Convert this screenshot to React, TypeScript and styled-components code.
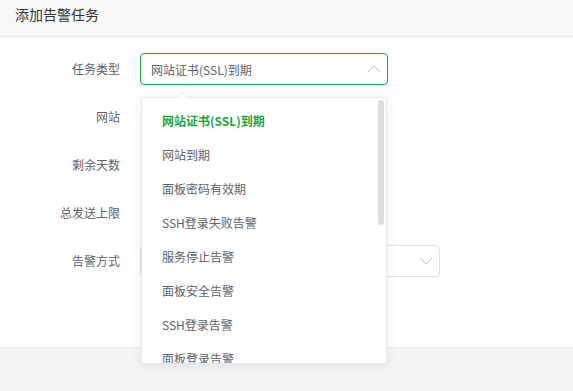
import * as React from 'react';
import styled, { createGlobalStyle } from 'styled-components';

const GlobalStyle = createGlobalStyle`
    html, body {
        margin: 0;
        padding: 0;
        background: #ffffff;
    }
    body {
        font-family: 'Noto Sans CJK SC', 'Noto Sans', sans-serif;
        font-size: 12px;
        color: #606266;
    }
`;

const Dialog = styled.div`
    width: 573px;
    height: 391px;
    display: flex;
    flex-direction: column;
    overflow: hidden;
`;

const Header = styled.div`
    height: 37px;
    box-sizing: border-box;
    padding: 4px 15px 0;
    background: #f8f8f8;
    border-bottom: 1px solid #e6e6e6;
    font-size: 14px;
    line-height: 20px;
    color: #333333;
`;

const Body = styled.div`
    flex: 1;
    padding-top: 16px;
    display: flex;
    flex-direction: column;
    gap: 16px;
    background: #ffffff;
`;

const Footer = styled.div`
    height: 43px;
    flex: 0 0 auto;
    background: #f3f4f4;
    border-top: 1px solid #ebeded;
`;

const FormItem = styled.div`
    display: flex;
    align-items: center;
    height: 32px;
`;

const Label = styled.label`
    width: 140px;
    box-sizing: border-box;
    padding-right: 20px;
    text-align: right;
    color: #606266;
    line-height: 32px;
    flex: 0 0 auto;
`;

const Control = styled.div`
    position: relative;
    height: 32px;
`;

const Select = styled.div<{ $width: number; $focus?: boolean }>`
    width: ${p => p.$width}px;
    height: 32px;
    box-sizing: border-box;
    border: 1px solid ${p => (p.$focus ? '#20a53a' : '#dcdfe6')};
    border-radius: 4px;
    padding: 0 30px 0 10px;
    display: flex;
    align-items: center;
    color: #606266;
    background: #ffffff;
    position: relative;
`;

const Chevron = styled.svg`
    position: absolute;
    right: 6px;
    top: 10px;
`;

const Dropdown = styled.div`
    position: absolute;
    left: 1px;
    top: 44px;
    width: 246px;
    height: 267px;
    box-sizing: border-box;
    border: 1px solid #e4e7ed;
    border-radius: 4px;
    background: #ffffff;
    box-shadow: 0 2px 12px rgba(0, 0, 0, 0.08);
    z-index: 10;
`;

const Arrow = styled.div`
    position: absolute;
    top: -6px;
    left: 34px;
    width: 0;
    height: 0;
    border-left: 6px solid transparent;
    border-right: 6px solid transparent;
    border-bottom: 6px solid #e4e7ed;

    &::after {
        content: '';
        position: absolute;
        left: -5px;
        top: 1px;
        border-left: 5px solid transparent;
        border-right: 5px solid transparent;
        border-bottom: 5px solid #ffffff;
    }
`;

const List = styled.ul`
    list-style: none;
    margin: 0;
    padding: 6px 0 0;
    height: 100%;
    box-sizing: border-box;
    overflow: hidden;
    border-radius: 4px;
`;

const Option = styled.li<{ $selected?: boolean }>`
    height: 34px;
    line-height: 34px;
    padding: 0 20px;
    font-size: 12px;
    color: ${p => (p.$selected ? '#20a53a' : '#606266')};
    font-weight: ${p => (p.$selected ? 700 : 400)};
    white-space: nowrap;
`;

const Thumb = styled.div`
    position: absolute;
    right: 2px;
    top: 2px;
    width: 6px;
    height: 125px;
    border-radius: 3px;
    background: #dddddd;
`;

const options = [
    '网站证书(SSL)到期',
    '网站到期',
    '面板密码有效期',
    'SSH登录失败告警',
    '服务停止告警',
    '面板安全告警',
    'SSH登录告警',
    '面板登录告警',
];

const ChevronIcon = ({ up }: { up?: boolean }) => (
    <Chevron width="14" height="10" viewBox="0 0 14 10">
        <path
            d={up ? 'M1 8 L7 2 L13 8' : 'M1 2 L7 8 L13 2'}
            fill="none"
            stroke="#c0c4cc"
            strokeWidth="1"
        />
    </Chevron>
);

export default function App() {
    const selected = options[0];
    return (
        <Dialog>
            <GlobalStyle />
            <Header>添加告警任务</Header>
            <Body>
                <FormItem>
                    <Label>任务类型</Label>
                    <Control>
                        <Select $width={248} $focus>
                            {selected}
                            <ChevronIcon up />
                        </Select>
                        <Dropdown>
                            <Arrow />
                            <List>
                                {options.map(o => (
                                    <Option key={o} $selected={o === selected}>
                                        {o}
                                    </Option>
                                ))}
                            </List>
                            <Thumb />
                        </Dropdown>
                    </Control>
                </FormItem>
                <FormItem>
                    <Label>网站</Label>
                </FormItem>
                <FormItem>
                    <Label>剩余天数</Label>
                </FormItem>
                <FormItem>
                    <Label>总发送上限</Label>
                </FormItem>
                <FormItem>
                    <Label>告警方式</Label>
                    <Control>
                        <Select $width={300}>
                            <ChevronIcon />
                        </Select>
                    </Control>
                </FormItem>
            </Body>
            <Footer />
        </Dialog>
    );
}
